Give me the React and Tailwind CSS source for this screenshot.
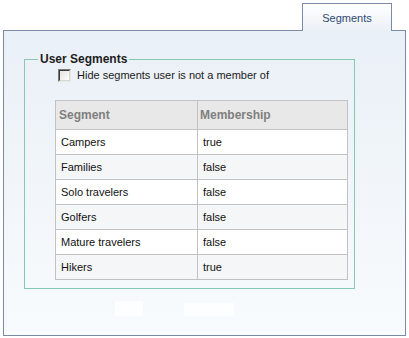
import React from "react";

const rows = [
  ["Campers", "true"],
  ["Families", "false"],
  ["Solo travelers", "false"],
  ["Golfers", "false"],
  ["Mature travelers", "false"],
  ["Hikers", "true"],
];

export default function App() {
  return (
    <div
      className="w-[409px] h-[338px] bg-white overflow-hidden"
      style={{ fontFamily: '"Liberation Sans", Arial, sans-serif' }}
    >
      {/* tab strip */}
      <div className="h-[30px] flex items-end justify-start pl-[302px] pt-[3px]">
        <div className="relative z-10 -mb-px w-[90px] h-[28px] border border-b-0 border-[#7b8aa6] bg-gradient-to-b from-white to-[#ebf0f7] flex items-center justify-center text-[11px] text-[#2f4a73] pt-[1px]">
          Segments
        </div>
      </div>
      {/* panel */}
      <div className="ml-[3px] w-[403px] h-[306px] border border-[#7b8aa6] bg-gradient-to-b from-[#eaf0f7] to-[#f8fbfd] pl-[20px] pt-[21px]">
        <fieldset className="w-[331px] border border-[#86c9b3] pb-[8px]">
          <legend className="ml-[13px] px-[2px] text-[12px] leading-[14px] font-bold text-[#1e1e1e]">
            User Segments
          </legend>
          <div className="flex items-center ml-[33px] mt-[3px] h-[13px] gap-[6px]">
            <span className="w-[13px] h-[13px] border border-t-[#7a7a7a] border-l-[#7a7a7a] border-b-[#e8e8e4] border-r-[#e8e8e4] bg-white">
              <span className="block w-full h-full border border-t-[#3c3c3c] border-l-[#3c3c3c] border-b-[#d8d6cf] border-r-[#d8d6cf] bg-gradient-to-br from-[#e4e3dd] to-white" />
            </span>
            <span className="text-[11px] text-[#1a1a1a] leading-[13px]">
              Hide segments user is not a member of
            </span>
          </div>
          <table className="ml-[30px] mt-[18px] w-[293px] border-collapse text-[11px] border border-[#c2c2c2]">
            <thead>
              <tr className="h-[29px] bg-[#e8e8e8]">
                <th className="w-[142px] text-left font-bold text-[12px] text-[#7f7f7f] pl-[3px] border border-[#c2c2c2]">
                  Segment
                </th>
                <th className="text-left font-bold text-[12px] text-[#7f7f7f] pl-[2px] border border-[#c2c2c2]">
                  Membership
                </th>
              </tr>
            </thead>
            <tbody>
              {rows.map(([a, b], i) => (
                <tr
                  key={a}
                  className={
                    "h-[25px] " + (i % 2 === 0 ? "bg-white" : "bg-[#f5f6f8]")
                  }
                >
                  <td className="pl-[5px] text-[#111] border border-[#c2c2c2]">{a}</td>
                  <td className="pl-[5px] text-[#111] border border-[#c2c2c2]">{b}</td>
                </tr>
              ))}
            </tbody>
          </table>
        </fieldset>
        <div className="flex mt-[12px] ml-[91px] gap-[41px] items-end">
          <div className="w-[28px] h-[15px] bg-white/70" />
          <div className="w-[50px] h-[13px] bg-white/70" />
        </div>
      </div>
    </div>
  );
}
